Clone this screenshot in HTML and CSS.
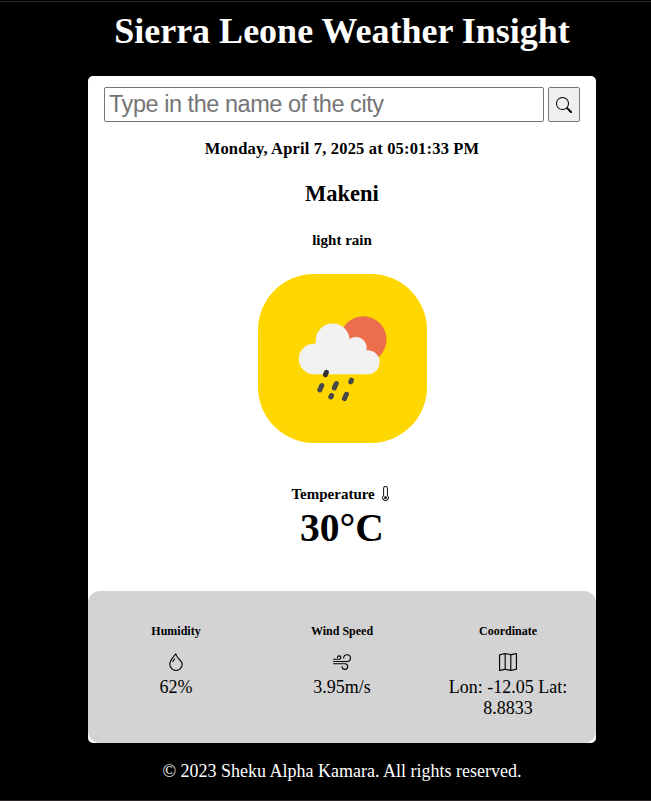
FILE: index.html
```html
<!DOCTYPE html>
<html lang="en">
<head>
<meta charset="utf-8">
<title>Sierra Leone Weather Insight</title>
<link rel="stylesheet" href="styles.css">
</head>
<body>
<main class="app">
  <h1>Sierra Leone Weather Insight</h1>
  <section class="card">
    <form class="search">
      <input type="text" placeholder="Type in the name of the city">
      <button type="button" aria-label="Search"><svg width="16" height="16" viewBox="0 0 16 16" fill="currentColor"><path d="M11.742 10.344a6.5 6.5 0 1 0-1.397 1.398h-.001q.044.06.098.115l3.85 3.85a1 1 0 0 0 1.415-1.414l-3.85-3.85a1 1 0 0 0-.115-.1zM12 6.5a5.5 5.5 0 1 1-11 0 5.5 5.5 0 0 1 11 0"/></svg></button>
    </form>
    <p class="date">Monday, April 7, 2025 at 05:01:33 PM</p>
    <h2>Makeni</h2>
    <p class="condition">light rain</p>
    <svg class="weather" viewBox="0 0 169 169">
      <circle cx="105.3" cy="65.5" r="23.2" fill="#ec6e4c"/>
      <g fill="#f2f2f2">
        <circle cx="56" cy="85" r="15.2"/>
        <circle cx="74.7" cy="66.5" r="17"/>
        <circle cx="98" cy="73.7" r="10.7"/>
        <circle cx="109.7" cy="88.2" r="12"/>
        <path d="M56 69.9 75 60 99 72 110 80v20.2H56z"/>
      </g>
      <g stroke="#484848" stroke-width="5" stroke-linecap="round">
        <path d="M68.4 98.3l-1 2.4" stroke="#333"/>
        <path d="M63.8 111.5l-2 4.4M78.3 109.5l-2 4.4M88.4 120.3l-2 4.3M93.5 106.2l-.8 1.6M73.6 121.5l-.8 1.5"/>
      </g>
    </svg>
    <h3>Temperature <svg width="15" height="15" viewBox="0 0 16 16" fill="currentColor"><path d="M8 14a1.5 1.5 0 1 0 0-3 1.5 1.5 0 0 0 0 3"/><path d="M8 0a2.5 2.5 0 0 0-2.5 2.5v7.55a3.5 3.5 0 1 0 5 0V2.5A2.5 2.5 0 0 0 8 0M6.5 2.5a1.5 1.5 0 1 1 3 0v7.987l.167.15a2.5 2.5 0 1 1-3.333 0l.166-.15z"/></svg></h3>
    <p class="temperature">30°C</p>
    <div class="details">
      <div class="detail">
        <h4>Humidity</h4>
        <svg width="18" height="18" viewBox="0 0 16 16" fill="currentColor"><path fill-rule="evenodd" d="M7.21.8C7.69.295 8 0 8 0q.164.544.371 1.038c.812 1.946 2.073 3.35 3.197 4.6C12.878 7.096 14 8.345 14 10a6 6 0 0 1-12 0C2 6.668 5.58 2.517 7.21.8m.413 1.021A31 31 0 0 0 5.794 3.99c-.726.95-1.436 2.008-1.96 3.07C3.304 8.133 3 9.138 3 10a5 5 0 0 0 10 0c0-1.201-.796-2.157-2.181-3.7l-.03-.032C9.75 5.11 8.5 3.72 7.623 1.82z"/><path d="M4.553 7.776c.82-1.641 1.717-2.753 2.093-3.13l.708.708c-.29.29-1.128 1.311-1.907 2.87z"/></svg>
        <p>62%</p>
      </div>
      <div class="detail">
        <h4>Wind Speed</h4>
        <svg width="18" height="18" viewBox="0 0 16 16" fill="currentColor"><path d="M12.5 2A2.5 2.5 0 0 0 10 4.5a.5.5 0 0 1-1 0A3.5 3.5 0 1 1 12.5 8H.5a.5.5 0 0 1 0-1h12a2.5 2.5 0 0 0 0-5m-7 1a1 1 0 0 0-1 1 .5.5 0 0 1-1 0 2 2 0 1 1 2 2h-5a.5.5 0 0 1 0-1h5a1 1 0 0 0 0-2M0 9.5A.5.5 0 0 1 .5 9h10.042a3 3 0 1 1-3 3 .5.5 0 0 1 1 0 2 2 0 1 0 2-2H.5a.5.5 0 0 1-.5-.5"/></svg>
        <p>3.95m/s</p>
      </div>
      <div class="detail">
        <h4>Coordinate</h4>
        <svg width="18" height="18" viewBox="0 0 16 16" fill="currentColor"><path fill-rule="evenodd" d="M15.817.113A.5.5 0 0 1 16 .5v14a.5.5 0 0 1-.402.49l-5 1a.5.5 0 0 1-.196 0L5.5 15.01l-4.902.98A.5.5 0 0 1 0 15.5v-14a.5.5 0 0 1 .402-.49l5-1a.5.5 0 0 1 .196 0L10.5.99l4.902-.98a.5.5 0 0 1 .415.103M10 1.91l-4-.8v12.98l4 .8zm1 12.98 4-.8V1.11l-4 .8zm-6-.8V1.11l-4 .8v12.98z"/></svg>
        <p>Lon: -12.05 Lat: 8.8833</p>
      </div>
    </div>
  </section>
  <footer>© 2023 Sheku Alpha Kamara. All rights reserved.</footer>
</main>
</body>
</html>
```
FILE: styles.css
```css
* { box-sizing: border-box; margin: 0; padding: 0; }
body {
  height: 801px;
  background: #000;
  border-top: 1px solid #000;
  border-bottom: 1px solid #2b2628;
  font: 18px "Liberation Serif", "Times New Roman", serif;
  overflow: hidden;
}
.app {
  border-top: 1px solid #2e2e2e;
  padding-left: 88px;
}
h1, .card, footer { width: 508px; }
h1 {
  color: #fff;
  font-size: 36px;
  line-height: 42px;
  padding-top: 8px;
  height: 74px;
  text-align: center;
  white-space: nowrap;
}
.card {
  height: 667px;
  background: #fff;
  border-radius: 5px;
  padding-top: 11px;
  display: flex;
  flex-direction: column;
  align-items: center;
  text-align: center;
  color: #000;
}
.search { display: flex; gap: 4px; height: 35px; }
.search input {
  width: 440px;
  border: 1px solid #767676;
  border-radius: 2px;
  padding: 0 4px;
  font: 23.5px "Liberation Sans", Arial, sans-serif;
  letter-spacing: -0.46px;
}
.search input::placeholder { color: #757575; }
.search button {
  width: 32px;
  border: 1px solid #767676;
  border-radius: 2px;
  background: #efefef;
  display: grid;
  place-items: center;
}
.date { font-size: 16.5px; letter-spacing: 0.17px; font-weight: bold; line-height: 20px; margin-top: 17px; }
h2 { font-size: 22.5px; line-height: 26px; margin-top: 22px; }
.condition { font-size: 15px; font-weight: bold; line-height: 18px; margin-top: 24px; }
.weather {
  width: 169px;
  height: 169px;
  flex: none;
  margin-top: 25px;
  background: #ffd700;
  border-radius: 56px;
}
h3 { font-size: 15px; line-height: 18px; margin-top: 42px; }
h3 svg { margin-left: -1px; vertical-align: -2px; }
.temperature { font-size: 39.5px; font-weight: bold; line-height: 46px; margin-top: 2px; }
.details {
  width: 100%;
  height: 152px;
  margin-top: auto;
  padding: 32px 5px 0;
  border-radius: 12px;
  background: #d3d3d3;
  display: grid;
  grid-template-columns: repeat(3, 1fr);
}
.detail { padding: 0 15px; }
.detail h4 { font-size: 12px; line-height: 16px; margin-bottom: 14px; }
.detail svg { display: block; margin: 0 auto 6px; }
.detail p { line-height: 21px; }
footer { color: #fff; text-align: center; line-height: 21px; margin-top: 18px; }
```
